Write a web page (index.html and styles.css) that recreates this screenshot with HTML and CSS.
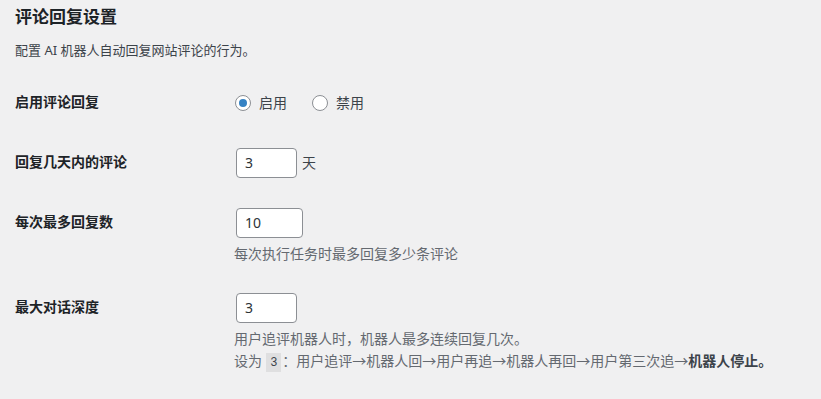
FILE: index.html
```html
<!DOCTYPE html>
<html lang="zh-CN">
<head>
<meta charset="utf-8">
<title>评论回复设置</title>
<link rel="stylesheet" href="styles.css">
</head>
<body>
<div class="wrap">
  <h2 class="title">评论回复设置</h2>
  <p class="intro">配置 AI 机器人自动回复网站评论的行为。</p>

  <div class="form">
    <div class="row row-first">
      <div class="th">启用评论回复</div>
      <div class="td td-radios">
        <label class="radio-label"><span class="radio checked"></span>启用</label>
        <label class="radio-label"><span class="radio"></span>禁用</label>
      </div>
    </div>

    <div class="row">
      <div class="th">回复几天内的评论</div>
      <div class="td">
        <div class="inline">
          <span class="input w61">3</span><span class="unit">天</span>
        </div>
      </div>
    </div>

    <div class="row">
      <div class="th">每次最多回复数</div>
      <div class="td">
        <span class="input w67">10</span>
        <p class="desc">每次执行任务时最多回复多少条评论</p>
      </div>
    </div>

    <div class="row">
      <div class="th">最大对话深度</div>
      <div class="td">
        <span class="input w61">3</span>
        <p class="desc">用户追评机器人时，机器人最多连续回复几次。</p>
        <p class="desc desc-second">设为 <code>3</code>：用户追评→机器人回→用户再追→机器人再回→用户第三次追→<strong>机器人停止。</strong></p>
      </div>
    </div>
  </div>
</div>
</body>
</html>
```

FILE: styles.css
```css
html, body {
  margin: 0;
  padding: 0;
  background: #f0f0f1;
}

body {
  font-family: "Noto Sans", "Noto Sans CJK SC", sans-serif;
  font-size: 13px;
  color: #3c434a;
}

.wrap {
  padding: 0 15px;
}

.title {
  margin: 6px 0 0;
  font-size: 17px;
  line-height: 22px;
  font-weight: 700;
  color: #1d2327;
}

.intro {
  margin: 12px 0 0;
  font-size: 13px;
  line-height: 20px;
}

.form {
  margin-top: 13px;
}

.row {
  display: grid;
  grid-template-columns: 210px 1fr;
}

.th {
  padding: 20px 10px 20px 0;
  font-size: 14px;
  line-height: 18px;
  font-weight: 700;
  color: #1d2327;
}

.td {
  padding: 15px 10px 15px 11px;
  font-size: 14px;
  line-height: 18px;
}

.row-first {
  height: 60px;
}

.td-radios {
  display: flex;
  align-items: center;
  gap: 26px;
  padding-top: 0;
  padding-bottom: 0;
}

.radio-label {
  display: flex;
  align-items: center;
  color: #3c434a;
  line-height: 20px;
}

.radio {
  box-sizing: border-box;
  width: 16px;
  height: 16px;
  margin: 0 8px 0 -1px;
  border: 1px solid #8c8f94;
  border-radius: 50%;
  background: #fff;
  display: inline-flex;
  align-items: center;
  justify-content: center;
}

.radio.checked::after {
  content: "";
  width: 8px;
  height: 8px;
  border-radius: 50%;
  background: #3582c4;
}

.inline {
  display: flex;
  align-items: center;
}

.input {
  box-sizing: border-box;
  display: flex;
  align-items: center;
  height: 30px;
  padding: 0 8px;
  border: 1px solid #8c8f94;
  border-radius: 4px;
  background: #fff;
  font-size: 14px;
  color: #2c3338;
}

.w61 { width: 61px; }
.w67 { width: 67px; }

.unit {
  margin-left: 5px;
  color: #3c434a;
}

.desc {
  margin: 5px 0 0 -2px;
  font-family: "Noto Sans CJK SC", "Noto Sans", sans-serif;
  font-size: 14px;
  line-height: 20px;
  color: #646970;
}

.desc-second {
  margin-top: 2px;
}

.desc code {
  font-family: "Liberation Mono", "DejaVu Sans Mono", monospace;
  font-size: 12px;
  padding: 3px 4px 2px;
  margin: 0 1px;
  background: rgba(0, 0, 0, 0.07);
  color: #3c434a;
}

.desc strong {
  color: #3c434a;
  font-weight: 700;
}
```
